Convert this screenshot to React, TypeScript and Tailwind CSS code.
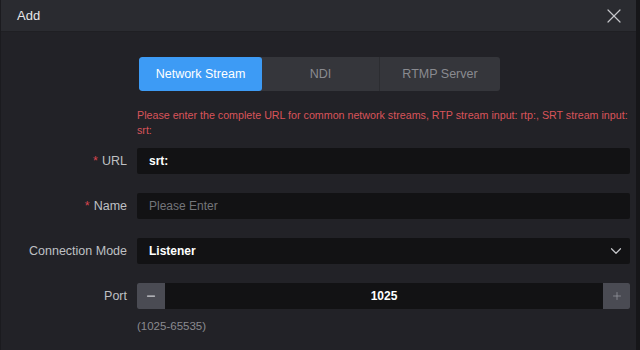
import { ChevronDown, X, Minus, Plus } from 'lucide-react'

const TABS = ['Network Stream', 'NDI', 'RTMP Server']

function Row({ label, required, children }: { label: string; required?: boolean; children: React.ReactNode }) {
  return (
    <div className="flex items-center h-[26px]">
      <div className="w-[136px] pr-[10px] text-right text-[12.5px] text-[#bfc0c4] shrink-0">
        {required && <span className="text-[#d9454f] mr-[4px]">*</span>}
        {label}
      </div>
      <div className="flex-1 h-full">{children}</div>
    </div>
  )
}

export default function App() {
  return (
    <div className="w-[640px] h-[350px] flex bg-[#222227] overflow-hidden" style={{ fontFamily: '"Liberation Sans", Arial, sans-serif' }}>
      <div className="flex-1 flex flex-col border-l border-[#1b1b1f]">
        <div className="h-[32px] flex items-center justify-between pl-[16px] pr-[10px] bg-[#2a2b30] border-b border-[#1f1f23] shrink-0">
          <span className="text-[13px] text-[#e6e6e8]">Add</span>
          <X size={24} strokeWidth={1.2} className="text-[#c5c6ca]" />
        </div>

        <div className="flex flex-col pr-[6px]">
          <div className="flex mt-[25px] pl-[138px]">
            <div className="flex h-[34px] w-[361px] rounded-[3px] bg-[#35363b] overflow-hidden text-[12.5px]">
              {TABS.map((t, i) => (
                <div
                  key={t}
                  className={
                    i === 0
                      ? 'w-[123px] flex items-center justify-center bg-[#3d9bf5] text-white rounded-[3px]'
                      : i === 1
                        ? 'w-[118px] flex items-center justify-center text-[#8a8b90] border-r border-[#2c2d31]'
                        : 'flex-1 flex items-center justify-center text-[#8a8b90]'
                  }
                >
                  {t}
                </div>
              ))}
            </div>
          </div>

          <div className="pl-[136px] -mr-[4px] mt-[17px] text-[10.7px] leading-[15px] text-[#d9545a]">
            Please enter the complete URL for common network streams, RTP stream input: rtp:, SRT stream input: srt:
          </div>

          <div className="flex flex-col gap-[19px] mt-[10px]">
            <Row label="URL" required>
              <div className="h-full rounded-[2px] bg-[#121214] flex items-center px-[12px] text-[12px] text-white font-semibold">srt:</div>
            </Row>
            <Row label="Name" required>
              <div className="h-full rounded-[2px] bg-[#121214] flex items-center px-[12px] text-[12px] text-[#74757a]">Please Enter</div>
            </Row>
            <Row label="Connection Mode">
              <div className="h-full rounded-[2px] bg-[#121214] flex items-center justify-between pl-[12px] pr-[5px] text-[12px] text-white font-semibold">
                <span>Listener</span>
                <ChevronDown size={18} strokeWidth={1.6} className="text-[#c5c6ca]" />
              </div>
            </Row>
            <Row label="Port">
              <div className="h-full flex bg-[#121214] rounded-[2px]">
                <div className="w-[28px] h-full bg-[#4a4b53] flex items-center justify-center rounded-l-[2px]">
                  <Minus size={12} strokeWidth={2.5} className="text-[#d0d1d5]" />
                </div>
                <div className="flex-1 flex items-center justify-center text-[12px] text-white font-semibold">1025</div>
                <div className="w-[27px] h-full bg-[#4a4b53] flex items-center justify-center rounded-r-[2px]">
                  <Plus size={12} strokeWidth={1.4} className="text-[#9c9da3]" />
                </div>
              </div>
            </Row>
          </div>
          <div className="pl-[136px] mt-[9px] text-[11.5px] text-[#8a8b90]">(1025-65535)</div>
        </div>
      </div>
      <div className="w-[4px] bg-[#161619] shrink-0" />
    </div>
  )
}
